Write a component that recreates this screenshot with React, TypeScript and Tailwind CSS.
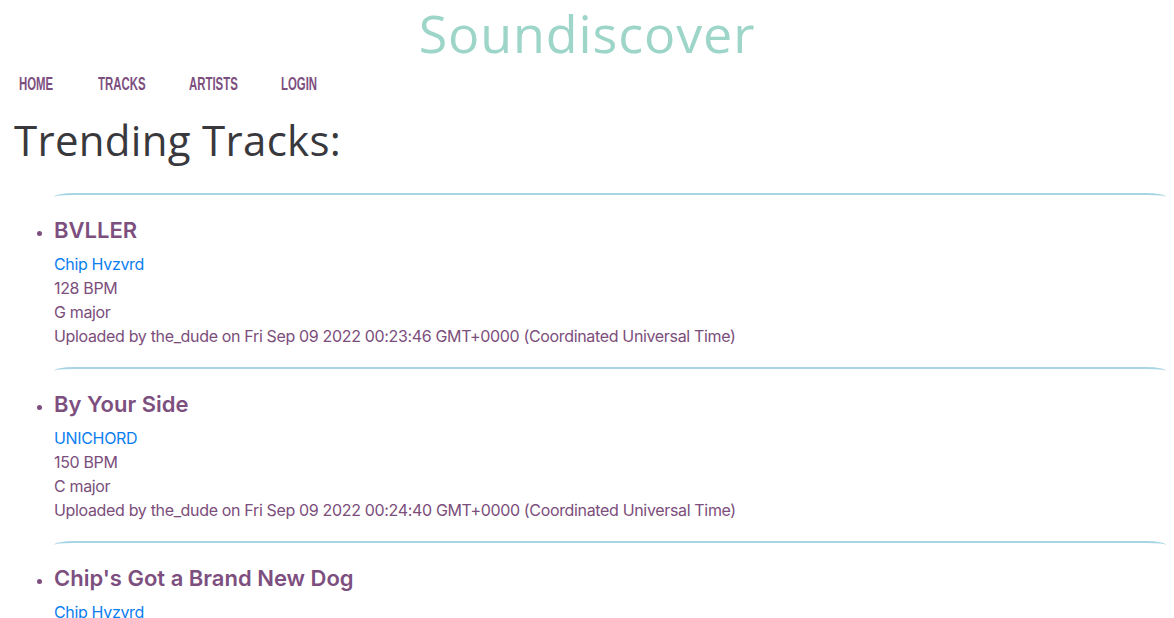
const tracks = [
  {
    title: 'BVLLER',
    artist: 'Chip Hvzvrd',
    bpm: 128,
    key: 'G major',
    uploader: 'the_dude',
    date: 'Fri Sep 09 2022 00:23:46 GMT+0000 (Coordinated Universal Time)',
  },
  {
    title: 'By Your Side',
    artist: 'UNICHORD',
    bpm: 150,
    key: 'C major',
    uploader: 'the_dude',
    date: 'Fri Sep 09 2022 00:24:40 GMT+0000 (Coordinated Universal Time)',
  },
  {
    title: "Chip's Got a Brand New Dog",
    artist: 'Chip Hvzvrd',
    bpm: 140,
    key: 'A minor',
    uploader: 'the_dude',
    date: 'Fri Sep 09 2022 00:25:12 GMT+0000 (Coordinated Universal Time)',
  },
]

// condensed nav labels (no Oswald available, so squeeze Liberation Sans)
const navLinks = [
  { label: 'HOME', w: 'w-[35px]' },
  { label: 'TRACKS', w: 'w-[47px]' },
  { label: 'ARTISTS', w: 'w-[48px]' },
  { label: 'LOGIN', w: 'w-[36px]' },
]

export default function App() {
  return (
    <div className="min-h-screen bg-white font-['Inter',sans-serif]">
      <h1 className="pt-[4px] text-center font-['Open_Sans',sans-serif] text-[52px] leading-[58px] font-normal tracking-[0.9px] text-[#9dd5c9]">
        Soundiscover
      </h1>

      <nav className="mt-[11px] flex gap-[44px] px-[19px] font-['Liberation_Sans',sans-serif] text-[19px] leading-[22px] font-bold text-[#7d4f7f]">
        {navLinks.map((l) => (
          <a key={l.label} href="#" className={`${l.w} block overflow-visible whitespace-nowrap`}>
            <span className="inline-block origin-left scale-x-[0.6]">{l.label}</span>
          </a>
        ))}
      </nav>

      <h2 className="mt-[18px] px-[14px] font-['Open_Sans',sans-serif] text-[42px] leading-[54px] tracking-[0.3px] text-[#38383d]">
        Trending Tracks:
      </h2>

      <ul className="mt-[26px] list-disc pl-[54px] pr-[8px] marker:text-[#7d4f7f]">
        {tracks.map((t) => (
          <li
            key={t.title}
            className="rounded-tl-[20px_4px] rounded-tr-[20px_4px] border-t-2 border-[#a7d5e4] pt-[21px] pb-[19px] text-[16px] leading-[24px] tracking-[-0.34px] text-[#7b4e7b]"
          >
            <h3 className="text-[22px] leading-[28px] font-semibold tracking-normal text-[#7d4f7f]">{t.title}</h3>
            <div className="mt-[8px]">
              <a href="#" className="text-[#0b7ef0]">
                {t.artist}
              </a>
            </div>
            <div>{t.bpm} BPM</div>
            <div>{t.key}</div>
            <div>
              Uploaded by {t.uploader} on {t.date}
            </div>
          </li>
        ))}
      </ul>
    </div>
  )
}
